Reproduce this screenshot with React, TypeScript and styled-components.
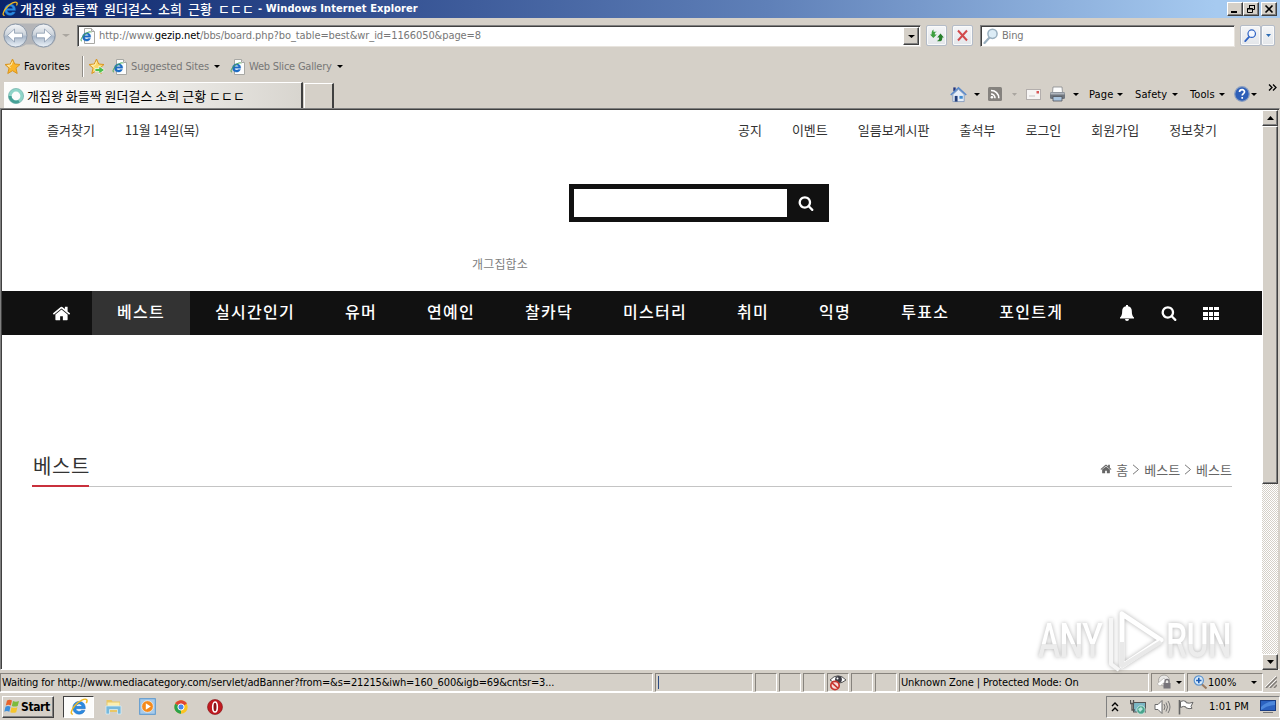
import React from "react";
import styled, { createGlobalStyle, css } from "styled-components";

const face = "#d5d0c8";
const tahoma = `"DejaVu Sans Condensed", "DejaVu Sans", "Noto Sans CJK KR", sans-serif`;
const gulim = `"Noto Sans CJK KR", sans-serif`;

const GlobalStyle = createGlobalStyle`
  * { box-sizing: border-box; }
  html, body { margin: 0; padding: 0; overflow: hidden; }
  body { width: 1280px; height: 720px; background: ${face}; font: 11px ${tahoma}; color: #000; }
  svg { display: block; flex: none; }
`;

const raised = css`
  background: ${face};
  border: 1px solid;
  border-color: #fff #404040 #404040 #fff;
  box-shadow: inset -1px -1px 0 #808080;
`;

const Desktop = styled.div`
  width: 1280px;
  height: 720px;
  display: flex;
  flex-direction: column;
  overflow: hidden;
  white-space: nowrap;
`;

const Text = styled.span<{ $ls?: number; $w?: number; $color?: string }>`
  flex: none;
  display: block;
  white-space: pre;
  letter-spacing: ${(p) => p.$ls ?? 0}px;
  width: ${(p) => (p.$w ? `${p.$w}px` : "auto")};
  color: ${(p) => p.$color ?? "inherit"};
`;
const Hostname = styled.span`
  color: #000;
`;

/* ---------- title bar ---------- */
const TitleBar = styled.header`
  height: 18px;
  flex: none;
  display: flex;
  align-items: center;
  padding: 0 3px 0 2px;
  background: linear-gradient(90deg, #0a246a 0%, #355293 30%, #5f80b8 60%, #a6caf0 95%);
  color: #fff;
`;
const TitleKorean = styled.span`
  width: 238px;
  margin-left: 2px;
  font: 500 13px/18px ${gulim};
  word-spacing: 3.2px;
  white-space: pre;
`;
const TitleLatin = styled.span`
  flex: 1;
  font: bold 11px/18px ${tahoma};
  letter-spacing: 0.1px;
`;
const WindowButton = styled.button<{ $gap?: boolean }>`
  ${raised}
  width: 16px;
  height: 14px;
  padding: 0;
  display: flex;
  align-items: center;
  justify-content: center;
  margin-left: ${(p) => (p.$gap ? 2 : 0)}px;
`;

/* ---------- address row ---------- */
const AddressRow = styled.div`
  height: 35px;
  flex: none;
  display: flex;
  align-items: center;
  padding: 0 5px 0 2px;
`;
const Field = styled.div<{ $w: number; $ml: number }>`
  width: ${(p) => p.$w}px;
  margin-left: ${(p) => p.$ml}px;
  height: 22px;
  flex: none;
  display: flex;
  align-items: center;
  background: #fff;
  border: 1px solid;
  border-color: #808080 #e8e4de #e8e4de #808080;
  box-shadow: inset 1px 1px 0 #404040;
  padding-left: 2px;
`;
const DropButton = styled.button`
  ${raised}
  width: 16px;
  height: 18px;
  margin: 1px 1px 0 auto;
  padding: 0;
  display: flex;
  align-items: center;
  justify-content: center;
`;
const GlassButton = styled.button<{ $w: number; $ml?: number }>`
  width: ${(p) => p.$w}px;
  height: 21px;
  margin-left: ${(p) => p.$ml ?? 0}px;
  padding: 0;
  display: flex;
  align-items: center;
  justify-content: center;
  border: 1px solid #b4bcc8;
  border-radius: 2px;
  background: linear-gradient(#f4f5f7, #e3e6ea);
  box-shadow: inset 0 0 0 1px #fafafa;
`;

/* ---------- favorites and tabs ---------- */
const FavoritesRow = styled.div`
  height: 27px;
  flex: none;
  display: flex;
  align-items: center;
  padding-left: 4px;
`;
const Separator = styled.i`
  width: 2px;
  height: 21px;
  margin: 0 4px 0 11px;
  border-left: 1px solid #908c86;
  border-right: 1px solid #fff;
`;
const TabRow = styled.div`
  height: 28px;
  flex: none;
  display: flex;
  align-items: flex-end;
  padding-left: 4px;
`;
const Tab = styled.div`
  width: 299px;
  height: 26px;
  display: flex;
  align-items: center;
  padding-left: 4px;
  background: linear-gradient(90deg, #fdfdfc, #f2f1ee 40%, #d8d5cf);
  border-top: 1px solid #fff;
  border-right: 2px solid #404040;
`;
const TabTitle = styled.span`
  margin-left: 3px;
  font: 400 13px/20px ${gulim};
`;
const NewTab = styled.div`
  width: 30px;
  height: 25px;
  margin-left: 1px;
  border: 1px solid #fff;
  border-right: 2px solid #404040;
  border-bottom: 0;
`;
const CommandBar = styled.div`
  display: flex;
  align-items: center;
  height: 28px;
  margin-left: auto;
  padding-right: 3px;
`;
const Overflow = styled.div`
  align-self: flex-start;
  padding-top: 3px;
`;
const Gap = styled.i<{ $w: number }>`
  width: ${(p) => p.$w}px;
  flex: none;
`;

/* ---------- page viewport ---------- */
const Viewport = styled.div`
  height: 562px;
  flex: none;
  display: flex;
  border: 1px solid;
  border-color: #808080 #d5d0c8 #fff #808080;
  box-shadow: inset 1px 1px 0 #404040;
  padding: 1px 1px 1px 1px;
`;
const Page = styled.main`
  width: 1260px;
  height: 560px;
  display: flex;
  flex-direction: column;
  background: #fff;
  font-family: ${gulim};
  color: #333;
`;
const TopLinks = styled.div`
  height: 40px;
  display: flex;
  align-items: center;
  padding: 0 45px;
  gap: 30px;
  font-size: 13px;
  line-height: 40px;
`;
const DateLabel = styled.span`
  letter-spacing: -0.2px;
`;
const Pusher = styled.i`
  flex: 1;
`;
const SearchBox = styled.div`
  width: 260px;
  height: 38px;
  margin: 34px 0 0 567px;
  display: flex;
  align-items: center;
  background: #111;
  padding-left: 5px;
`;
const SearchInput = styled.div`
  width: 213px;
  height: 28px;
  margin-right: 11px;
  background: #fff;
`;
const Keyword = styled.div`
  height: 18px;
  margin: 33px 0 0 470px;
  font-size: 12px;
  line-height: 18px;
  letter-spacing: 0.15px;
  color: #808080;
`;
const Nav = styled.nav`
  height: 44px;
  margin-top: 18px;
  display: flex;
  align-items: center;
  background: #111;
  color: #fff;
  padding: 0 43px 0 50px;
`;
const NavItem = styled.a<{ $active?: boolean }>`
  height: 44px;
  padding: 0 25px;
  font-size: 16px;
  font-weight: 500;
  line-height: 41px;
  letter-spacing: 1.28px;
  background: ${(p) => (p.$active ? "#333" : "transparent")};
`;
const Heading = styled.div`
  width: 1200px;
  height: 37px;
  margin: 115px 0 0 30px;
  display: flex;
  justify-content: space-between;
  border-bottom: 1px solid #c4c4c4;
`;
const HeadingTitle = styled.h1`
  height: 37px;
  width: 57px;
  margin: 0;
  padding-left: 1px;
  font-size: 20px;
  font-weight: 400;
  line-height: 31px;
  letter-spacing: 0.6px;
  border-bottom: 2px solid #c9303c;
`;
const Crumbs = styled.div`
  display: flex;
  align-items: center;
  height: 38px;
  gap: 4px;
  font-size: 13px;
  color: #666;
`;

/* ---------- scroll bar ---------- */
const ScrollBar = styled.div`
  width: 16px;
  height: 560px;
  display: flex;
  flex-direction: column;
  background: repeating-conic-gradient(#fff 0 25%, ${face} 0 50%) 0 0 / 2px 2px;
`;
const ScrollButton = styled.div`
  ${raised}
  height: 16px;
  display: flex;
  align-items: center;
  justify-content: center;
`;
const Thumb = styled.div`
  ${raised}
  height: 358px;
  margin-bottom: auto;
`;

/* ---------- watermark ---------- */
const Watermark = styled.div`
  position: absolute;
  left: 1038px;
  top: 607px;
  width: 200px;
  height: 68px;
  display: flex;
  align-items: center;
  filter: drop-shadow(0 0 2px rgba(0, 0, 0, 0.3));
`;
const WatermarkWord = styled.span<{ $w: number; $trim: number }>`
  flex: none;
  width: ${(p) => p.$w}px;
  margin-right: -${(p) => p.$trim}px;
  font: 500 48px/68px Roboto, "Liberation Sans", sans-serif;
  letter-spacing: -1px;
  transform: scaleX(0.7);
  transform-origin: 0 50%;
  background: linear-gradient(#fff 54%, #ececec 54%);
  -webkit-background-clip: text;
  color: transparent;
`;

/* ---------- status bar and taskbar ---------- */
const StatusBar = styled.div`
  height: 22px;
  flex: none;
  display: flex;
  align-items: center;
  gap: 2px;
  padding-top: 2px;
`;
const StatusCell = styled.div<{ $w: number }>`
  width: ${(p) => p.$w}px;
  height: 19px;
  flex: none;
  display: flex;
  align-items: center;
  border: 1px solid;
  border-color: #87837d #fff #fff #87837d;
  padding-left: 1px;
`;
const Taskbar = styled.footer`
  height: 28px;
  flex: none;
  display: flex;
  align-items: center;
  border-top: 1px solid #fff;
  padding-left: 2px;
`;
const StartButton = styled.button`
  ${raised}
  width: 52px;
  height: 22px;
  padding: 0 0 0 1px;
  display: flex;
  align-items: center;
  gap: 1px;
  font: bold 12px ${tahoma};
  letter-spacing: -0.4px;
`;
const ActiveTask = styled.div`
  width: 31px;
  height: 22px;
  margin-left: 9px;
  display: flex;
  align-items: center;
  justify-content: center;
  background: #fcfcfb;
  border: 1px solid;
  border-color: #404040 #fff #fff #404040;
`;
const Tray = styled.div`
  width: 174px;
  height: 22px;
  margin-left: auto;
  display: flex;
  align-items: center;
  border: 1px solid;
  border-color: #808080 #fff #fff #808080;
  padding-left: 4px;
`;

/* ---------- icons ---------- */
const Caret = ({ color = "#000", w = 6 }: { color?: string; w?: number }) => (
  <svg width={w} height="3" viewBox="0 0 6 3" preserveAspectRatio="none"><path d="M0 0h6L3 3z" fill={color} /></svg>
);
const IELogo = ({ size = 16 }: { size?: number }) => (
  <svg width={size} height={size} viewBox="0 0 16 16">
    <path d="M13.6 9.5H5.3c.2 1.6 1.4 2.4 2.8 2.4 1 0 1.7-.3 2.200-1h3c-.8 2.200-2.700 3.500-5.200 3.500C4.800 14.400 2.500 12 2.500 8.700S4.900 3 8.100 3s5.700 2.200 5.500 6.500zM5.400 7.400h5.200c-.2-1.300-1.200-2.100-2.500-2.100-1.400 0-2.400.8-2.700 2.100z" fill="#2a8ae0" stroke="#1560b8" strokeWidth=".4" />
    <path d="M2.600 14.300C.3 14.800.5 11 4.600 6.500 8.500 2.200 13.300.2 14.700 1.400c.7.600.5 1.800-.2 3.100" fill="none" stroke="#f0b820" strokeWidth="1.300" />
  </svg>
);
const PageIE = () => (
  <svg width="16" height="16" viewBox="0 0 16 16">
    <path d="M4.500.5h7l3 3v12h-10z" fill="#fdfdfd" stroke="#a8a8a4" />
    <path d="M11.500.5v3h3" fill="#ddd" stroke="#a8a8a4" />
    <path d="M10.700 9.200H4.600c.1 1.200.9 1.900 2 1.900.8 0 1.200-.3 1.500-.7h2.300c-.6 1.700-2 2.700-3.900 2.700-2.400 0-4.100-1.800-4.100-4.100S4.200 4.800 6.600 4.800s4.400 1.700 4.100 4.400zM4.700 7.700h3.700c-.2-.9-.9-1.400-1.800-1.400-1 0-1.700.5-1.900 1.400z" fill="#1e6cc4" stroke="#1e6cc4" strokeWidth=".4" />
    <path d="M1.800 13.100C-.3 12.800 2 8.500 5 6.200 8 3.700 10.800 3.200 11.300 4.500" fill="none" stroke="#48a850" strokeWidth="1" />
  </svg>
);
const NavArrows = () => (
  <svg width="56" height="28" viewBox="0 0 56 28">
    <defs>
      <linearGradient id="orb" x1="0" y1="0" x2="0" y2="1">
        <stop offset="0" stopColor="#f4f6f8" /><stop offset=".45" stopColor="#cdd4dc" />
        <stop offset=".55" stopColor="#a9b8ca" /><stop offset="1" stopColor="#eef4fa" />
      </linearGradient>
    </defs>
    <path d="M13 1.500h29a12 12 0 0 1 0 24q-6 0-10-3h-8q-4 3-10 3a12 12 0 0 1-1-24z" fill="#b4b5b8" />
    {[13.5, 41.5].map((cx) => (
      <circle key={cx} cx={cx} cy="13.500" r="11.500" fill="url(#orb)" stroke="#8b98a8" />
    ))}
    <g fill="#fff" stroke="#8a9bb0" strokeWidth=".8">
      <path d="M5.500 13.500l7-6.500v4.200h8v4.600h-8V20z" />
      <path d="M49.500 13.500l-7-6.500v4.200h-8v4.600h8V20z" />
    </g>
  </svg>
);
const Star = ({ add }: { add?: boolean }) => (
  <svg width="17" height="17" viewBox="0 0 17 17">
    <path d="M8.500 1l2.200 5 5.300.5-4 3.600 1.200 5.400-4.700-2.800-4.700 2.800L5 10.100 1 6.500 6.300 6z" fill={add ? "#fbd86a" : "#fbb62c"} stroke="#d99520" />
    <path d="M8.500 3.500L7 7l-3.500.5 3 2" fill="none" stroke="#fff0b8" />
    {add && <path d="M7 10.500h4V8l5.500 4-5.500 4v-2.500H7z" fill="#4dbf4a" stroke="#fff" strokeWidth=".7" />}
  </svg>
);
const Spinner = () => (
  <svg width="16" height="16" viewBox="0 0 16 16">
    <circle cx="8" cy="8" r="6" fill="none" stroke="#8fd4c8" strokeWidth="3.200" />
    <path d="M2 8a6 6 0 0 0 9 5.200" fill="none" stroke="#45a096" strokeWidth="3" />
    <circle cx="8" cy="8" r="7.600" fill="none" stroke="#66aaa2" strokeWidth=".6" />
  </svg>
);
const Refresh = () => (
  <svg width="16" height="15" viewBox="0 0 16 15">
    <path d="M4.500 1.500v2.300H8c-2 .4-2.200 1.500-2.200 2.700h2L4.300 10 1 6.500h1.600C2.500 4 3 2.500 4.500 1.500z" fill="#3ea040" />
    <path d="M11.500 13.500V13c-1.500.3-2.700.2-3.700 0 2-.5 2.400-2 2.400-3.500h-2l3.300-4L14.900 9.500h-1.600c0 2-.3 3.200-1.800 4z" fill="#277f2b" />
  </svg>
);
const Cross = () => (
  <svg width="13" height="13" viewBox="0 0 13 13">
    <path d="M2 1.500l9 10M11 1.500l-9 10" stroke="#d24a4c" strokeWidth="2" />
  </svg>
);
const Lens = ({ color, size = 16, glass = "#dcecf6" }: { color: string; size?: number; glass?: string }) => (
  <svg width={size} height={size} viewBox="0 0 16 16">
    <path d="M6.500 9.500L1.500 15" stroke={color} strokeWidth="2.200" strokeLinecap="round" />
    <circle cx="9.500" cy="5.800" r="4.600" fill={glass} stroke={color} strokeWidth="1.500" />
  </svg>
);
const HomeFull = () => (
  <svg width="17" height="17" viewBox="0 0 18 17">
    <path d="M3.500 1h2.500v4h-2.500z" fill="#23357e" />
    <path d="M3 8.500L9 3l6 5.500V16H3z" fill="#e6eef8" stroke="#7792b8" strokeWidth=".8" />
    <path d="M.8 9L9 1.500 17.200 9" fill="none" stroke="#5b8acb" strokeWidth="1.700" />
    <path d="M5 10h3v6H5z" fill="#243f7a" /><path d="M10 10h3.500v3H10z" fill="#3f8bd0" />
  </svg>
);
const Feed = () => (
  <svg width="14" height="14" viewBox="0 0 14 14">
    <rect width="14" height="14" rx="1.500" fill="#85827e" />
    <path d="M3 7a4 4 0 0 1 4 4.200M3 3.500a7.600 7.600 0 0 1 7.800 7.700" fill="none" stroke="#fff" strokeWidth="1.600" />
    <circle cx="3.900" cy="10.200" r="1.300" fill="#fff" />
  </svg>
);
const Mail = () => (
  <svg width="15" height="11" viewBox="0 0 15 11">
    <rect x=".5" y=".5" width="14" height="10" fill="#f7f5f4" stroke="#b3aeac" />
    <rect x="10.500" y="2" width="2.500" height="2.500" fill="#d85858" /><path d="M3 7h6" stroke="#c8c4c4" />
  </svg>
);
const Printer = () => (
  <svg width="17" height="16" viewBox="0 0 17 16">
    <path d="M4 1h9l.5 6h-10z" fill="#fdfdfd" stroke="#85888c" strokeWidth=".8" />
    <rect x="1" y="6" width="15" height="7" rx="1.500" fill="#70767e" />
    <rect x="1.500" y="6.500" width="14" height="2" fill="#b0b6be" />
    <path d="M4 10.500h9V15H4z" fill="#a9c4de" stroke="#50545a" strokeWidth=".8" />
  </svg>
);
const Help = () => (
  <svg width="16" height="16" viewBox="0 0 16 16">
    <circle cx="8" cy="8" r="7.300" fill="#2e5fb8" stroke="#8b9fc0" strokeWidth="1.200" />
    <path d="M5.500 6c.2-3.200 5.200-3 5 0-.1 1.500-2.300 1.700-2.300 3.500M8.200 11v1.800" fill="none" stroke="#fff" strokeWidth="1.700" />
  </svg>
);
const SiteHome = ({ size, color }: { size: number; color: string }) => (
  <svg width={size} height={size} viewBox="0 0 1792 1792" fill={color}>
    <path d="M1472 992v480q0 26-19 45t-45 19h-384v-384h-256v384h-384q-26 0-45-19t-19-45v-480q0-1 .5-3t.5-3l575-474 575 474q1 2 1 6zm223-69l-62 74q-8 9-21 11h-3q-13 0-21-7l-692-577-692 577q-12 8-24 7-13-2-21-11l-62-74q-8-10-7-23.500t11-21.500l719-599q32-26 76-26t76 26l244 204v-195q0-14 9-23t23-9h192q14 0 23 9t9 23v408l219 182q10 8 11 21.500t-7 23.500z" />
  </svg>
);
const SiteSearch = () => (
  <svg width="16" height="16" viewBox="0 0 1792 1792" fill="#fff">
    <path d="M1216 832q0-185-131.500-316.500t-316.500-131.500-316.500 131.500-131.500 316.500 131.500 316.500 316.500 131.500 316.500-131.500 131.500-316.500zm512 832q0 52-38 90t-90 38q-54 0-90-38l-343-342q-179 124-399 124-143 0-273.500-55.500t-225-150-150-225-55.500-273.500 55.500-273.500 150-225 225-150 273.500-55.500 273.500 55.500 225 150 150 225 55.500 273.500q0 220-124 399l343 343q37 37 37 90z" />
  </svg>
);
const Bell = () => (
  <svg width="14" height="16" viewBox="0 0 14 16">
    <path d="M6 0h2v1.300c2.500.5 3.800 2.300 3.800 4.500 0 3.700.7 5.500 2.200 6.700v1H0v-1c1.500-1.200 2.200-3 2.200-6.700 0-2.200 1.300-4 3.800-4.500zM5 14h4a2 2 0 0 1-4 0z" fill="#fff" />
  </svg>
);
const Grid = () => (
  <svg width="16" height="13" viewBox="0 0 16 13" shapeRendering="crispEdges">
    {[0, 5, 10].map((y) => [0, 6, 11].map((x) => (
      <rect key={`${x}-${y}`} x={x} y={y} width={x === 6 ? 4 : 5} height={y === 5 ? 4 : 3} fill="#fff" />
    )))}
  </svg>
);
const Chevron = () => (
  <svg width="8" height="11" viewBox="0 0 8 11"><path d="M1 .8l5.500 4.700L1 10.200" fill="none" stroke="#777" /></svg>
);
const BlockedEye = () => (
  <svg width="18" height="17" viewBox="0 0 18 17">
    <path d="M1 6Q9-2.500 17 6 9 12.500 1 6z" fill="#fff" stroke="#555" />
    <circle cx="9.500" cy="5.500" r="3.400" fill="#3c3c44" /><circle cx="8.500" cy="4.500" r="1" fill="#fff" />
    <circle cx="6" cy="11.500" r="4.200" fill="#f8dcdc" stroke="#c8342e" strokeWidth="1.700" />
    <path d="M3 8.800l6 5.400" stroke="#c8342e" strokeWidth="1.600" />
  </svg>
);
const PrivacyLock = () => (
  <svg width="17" height="16" viewBox="0 0 17 16">
    <circle cx="8" cy="6.500" r="5.500" fill="#e9e8e6" stroke="#aaa7a2" />
    <path d="M1 10l7-6 2 3-6 5z" fill="#fff" stroke="#b5b2ae" strokeWidth=".7" />
    <path d="M9 9V7.500a2 2 0 0 1 4 0V9" fill="none" stroke="#77747a" strokeWidth="1.300" />
    <rect x="7.500" y="9" width="7" height="5.500" fill="#77747a" />
  </svg>
);
const ZoomIn = () => (
  <svg width="15" height="15" viewBox="0 0 15 15">
    <path d="M8 8.500l5.500 5" stroke="#9a7a60" strokeWidth="2" />
    <circle cx="5.800" cy="5.500" r="4.600" fill="#d8eafa" stroke="#5c94d0" strokeWidth="1.200" />
    <path d="M5.800 2.800v5.400M3.100 5.500h5.400" stroke="#1c5cb4" strokeWidth="1.600" />
  </svg>
);
const Grip = () => (
  <svg width="12" height="12" viewBox="0 0 12 12">
    <path d="M1 12L12 1M5 12l7-7M9 12l3-3" stroke="#807c78" strokeWidth="1.500" />
    <path d="M0 11L11 0M4 11l7-7" stroke="#fff" strokeWidth=".8" />
  </svg>
);
const WindowsFlag = () => (
  <svg width="16" height="15" viewBox="0 0 16 15">
    <path d="M3 1.500q2.500-1.300 5 0L6.800 6.500q-2.500-1.300-5 0z" fill="#e8642c" />
    <path d="M9 2q2.800 1.300 6 0l-1.300 5q-3 1.200-5.900 0z" fill="#7dbb3c" />
    <path d="M1.500 7.700q2.600-1.300 5 0l-1.200 5q-2.500-1.300-5 0z" fill="#3c8fdc" />
    <path d="M7.500 8.200q2.900 1.200 5.900 0l-1.200 5q-3 1.200-5.900 0z" fill="#f6c52c" />
  </svg>
);
const Explorer = () => (
  <svg width="17" height="17" viewBox="0 0 17 17">
    <path d="M1.500 2h5l1 1.500H15V14H1.500z" fill="#e9c766" /><path d="M2.500 4.500h12v4h-12z" fill="#fbeeb0" />
    <path d="M1 8h15v8h-3.500v-4.500h-8V16H1z" fill="#76b8dc" stroke="#d6eef8" strokeWidth=".8" />
  </svg>
);
const MediaPlayer = () => (
  <svg width="17" height="17" viewBox="0 0 17 17">
    <rect x=".7" y=".7" width="15.600" height="15.600" fill="#a8cbea" stroke="#5696d0" />
    <circle cx="8.500" cy="8.500" r="5.800" fill="#f48a1c" stroke="#fff" strokeWidth=".6" /><path d="M6.800 5.200v6.600l5-3.300z" fill="#fff" />
  </svg>
);
const Chrome = () => (
  <svg width="14" height="14" viewBox="0 0 14 14">
    <circle cx="7" cy="7" r="6.700" fill="#fbc421" />
    <path d="M7 7L1.200 3.650a6.700 6.700 0 0 1 11.600 0z" fill="#df4535" />
    <path d="M7 7L1.200 3.650A6.700 6.700 0 0 0 7 13.700z" fill="#2ba24c" />
    <circle cx="7" cy="7" r="3.100" fill="#4688ee" stroke="#fff" />
  </svg>
);
const Opera = () => (
  <svg width="16" height="16" viewBox="0 0 16 16">
    <circle cx="8" cy="8" r="7.500" fill="#c11a20" stroke="#801014" strokeWidth=".6" />
    <ellipse cx="8" cy="8" rx="2.300" ry="5" fill="#8c1216" stroke="#fff" strokeWidth="1.600" />
  </svg>
);
const Network = () => (
  <svg width="16" height="16" viewBox="0 0 16 16">
    <rect x="3.500" y="3.500" width="12" height="9.500" fill="#7bb7c4" stroke="#555" />
    <path d="M0.500 1v3.500h3V1M2 4.500V11h3" fill="none" stroke="#555" strokeWidth="1.300" />
    <circle cx="11" cy="11" r="4.200" fill="#48a48c" stroke="#e8f4f0" strokeWidth=".7" /><path d="M8 10l3-2 2 2-3 3z" fill="#b8e4dc" />
  </svg>
);
const Speaker = () => (
  <svg width="17" height="16" viewBox="0 0 17 16">
    <path d="M1 5.500h3l4-4v13l-4-4H1z" fill="#fff" stroke="#6c6c6c" />
    <path d="M10 5q2 3 0 6M12 3.500q3 4.500 0 9M14 2q4 6 0 12" fill="none" stroke="#777" />
  </svg>
);
const Flag = () => (
  <svg width="16" height="16" viewBox="0 0 16 16">
    <path d="M1.500 1v14.500" stroke="#666" strokeWidth="1.600" />
    <path d="M2.500 2.500q3-1.500 5.500 0v1.200q3 1.200 7-.4l-2 4 1 2q-3 1-6-.5V8q-2.500-1.500-5.500.5z" fill="#fff" stroke="#666" />
  </svg>
);
const ShowDesktop = () => (
  <svg width="16" height="13" viewBox="0 0 16 13">
    <rect x=".5" y=".5" width="15" height="10" fill="#2c62c0" stroke="#183c84" /><path d="M1 7Q7 1 15 1v4Q8 5 1 10z" fill="#4d88dc" /><path d="M3 12.500h10" stroke="#777" />
  </svg>
);

const navItems = ["베스트", "실시간인기", "유머", "연예인", "찰카닥", "미스터리", "취미", "익명", "투표소", "포인트게"];
const memberLinks = ["공지", "이벤트", "일름보게시판", "출석부", "로그인", "회원가입", "정보찾기"];

export default function App() {
  return (
    <Desktop>
      <GlobalStyle />
      <TitleBar>
        <IELogo />
        <TitleKorean>개집왕 화들짝 원더걸스 소희 근황 ㄷㄷㄷ</TitleKorean>
        <TitleLatin>- Windows Internet Explorer</TitleLatin>
        <WindowButton><svg width="10" height="10"><path d="M1 8h6" stroke="#000" strokeWidth="2" /></svg></WindowButton>
        <WindowButton><svg width="10" height="10"><path d="M3.500 4V1.500h5v4H7M3 1.500h6M1.500 4.500h5v4h-5zM1 5h6" fill="none" stroke="#000" /></svg></WindowButton>
        <WindowButton $gap><svg width="10" height="10"><path d="M1.500 1.500l7 7M8.500 1.500l-7 7" stroke="#000" strokeWidth="1.600" /></svg></WindowButton>
      </TitleBar>

      <AddressRow>
        <NavArrows />
        <Gap $w={4} />
        <Caret color="#aaa6a0" w={8} />
        <Field $w={844} $ml={7}>
          <PageIE />
          <Gap $w={3} />
          <Text $ls={-0.09} $color="#777">http://www.<Hostname>gezip.net</Hostname>/bbs/board.php?bo_table=best&amp;wr_id=1166050&amp;page=8</Text>
          <DropButton><Caret w={7} /></DropButton>
        </Field>
        <GlassButton $w={21} $ml={5}><Refresh /></GlassButton>
        <GlassButton $w={21} $ml={5}><Cross /></GlassButton>
        <Field $w={255} $ml={7}>
          <Lens color="#9ab0c0" />
          <Gap $w={3} />
          <Text $ls={-0.2} $color="#777">Bing</Text>
        </Field>
        <GlassButton $w={21} $ml={5}><Lens color="#2f63c4" size={13} glass="#f4f8ff" /></GlassButton>
        <GlassButton $w={14}><Caret color="#2c6cb4" w={5} /></GlassButton>
      </AddressRow>

      <FavoritesRow>
        <Star />
        <Gap $w={3} />
        <Text $w={47} $ls={0.15}>Favorites</Text>
        <Separator />
        <Star add />
        <Gap $w={7} />
        <PageIE />
        <Gap $w={3} />
        <Text $w={79} $ls={-0.13} $color="#777">Suggested Sites</Text>
        <Gap $w={4} />
        <Caret />
        <Gap $w={10} />
        <PageIE />
        <Gap $w={3} />
        <Text $w={83} $ls={-0.22} $color="#777">Web Slice Gallery</Text>
        <Gap $w={5} />
        <Caret />
      </FavoritesRow>

      <TabRow>
        <Tab><Spinner /><TabTitle>개집왕 화들짝 원더걸스 소희 근황 ㄷㄷㄷ</TabTitle></Tab>
        <NewTab />
        <CommandBar>
          <HomeFull /><Gap $w={7} /><Caret /><Gap $w={8} />
          <Feed /><Gap $w={10} /><Caret color="#aaa6a0" w={5} /><Gap $w={9} />
          <Mail /><Gap $w={8} /><Printer /><Gap $w={7} /><Caret /><Gap $w={10} />
          <Text $w={25} $ls={0.15}>Page</Text><Gap $w={3} /><Caret /><Gap $w={12} />
          <Text $w={33} $ls={0.1}>Safety</Text><Gap $w={4} /><Caret /><Gap $w={12} />
          <Text $w={26} $ls={0.1}>Tools</Text><Gap $w={3} /><Caret /><Gap $w={9} />
          <Help /><Gap $w={1} /><Caret /><Gap $w={11} />
          <Overflow><svg width="9" height="9"><path d="M1 1.500l3 3-3 3M5 1.500l3 3-3 3" fill="none" stroke="#000" strokeWidth="1.300" /></svg></Overflow>
        </CommandBar>
      </TabRow>

      <Viewport>
        <Page>
          <TopLinks>
            <span>즐겨찾기</span>
            <DateLabel>11월 14일(목)</DateLabel>
            <Pusher />
            {memberLinks.map((label) => <span key={label}>{label}</span>)}
          </TopLinks>
          <SearchBox><SearchInput /><SiteSearch /></SearchBox>
          <Keyword>개그집합소</Keyword>
          <Nav>
            <SiteHome size={19} color="#fff" />
            <Gap $w={21} />
            {navItems.map((label, i) => <NavItem key={label} $active={i === 0}>{label}</NavItem>)}
            <Pusher />
            <Bell /><Gap $w={27} /><SiteSearch /><Gap $w={26} /><Grid />
          </Nav>
          <Heading>
            <HeadingTitle>베스트</HeadingTitle>
            <Crumbs>
              <SiteHome size={12} color="#666" /><span>홈</span><Chevron /><span>베스트</span><Chevron /><span>베스트</span>
            </Crumbs>
          </Heading>
        </Page>
        <ScrollBar>
          <ScrollButton><svg width="7" height="4"><path d="M0 4h7L3.500 0z" /></svg></ScrollButton>
          <Thumb />
          <ScrollButton><svg width="7" height="4"><path d="M0 0h7L3.500 4z" /></svg></ScrollButton>
        </ScrollBar>
      </Viewport>

      <StatusBar>
        <StatusCell $w={653}><Text $ls={-0.125}>Waiting for http://www.mediacategory.com/servlet/adBanner?from=&amp;s=21215&amp;iwh=160_600&amp;igb=69&amp;cntsr=3...</Text></StatusCell>
        <StatusCell $w={98}><svg width="3" height="13"><path d="M1.500 0v13" stroke="#2c4c84" /></svg></StatusCell>
        <StatusCell $w={22} />
        <StatusCell $w={22} />
        <StatusCell $w={22} />
        <StatusCell $w={22}><BlockedEye /></StatusCell>
        <StatusCell $w={22} />
        <StatusCell $w={22} />
        <StatusCell $w={250}><Text $ls={-0.13}>Unknown Zone | Protected Mode: On</Text></StatusCell>
        <StatusCell $w={34}><Gap $w={3} /><PrivacyLock /><Gap $w={3} /><Caret /></StatusCell>
        <StatusCell $w={76}><Gap $w={4} /><ZoomIn /><Text $w={43}>100%</Text><Caret /></StatusCell>
        <Grip />
      </StatusBar>

      <Taskbar>
        <StartButton><WindowsFlag />Start</StartButton>
        <ActiveTask><IELogo size={18} /></ActiveTask>
        <Gap $w={11} /><Explorer />
        <Gap $w={17} /><MediaPlayer />
        <Gap $w={18} /><Chrome />
        <Gap $w={19} /><Opera />
        <Tray>
          <svg width="8" height="12"><path d="M1 5l3-3 3 3M1 10l3-3 3 3" fill="none" stroke="#000" strokeWidth="1.400" /></svg>
          <Gap $w={11} /><Network />
          <Gap $w={8} /><Speaker />
          <Gap $w={7} /><Flag />
          <Gap $w={15} /><Text $w={40}>1:01 PM</Text>
          <Gap $w={11} /><ShowDesktop />
        </Tray>
      </Taskbar>

      <Watermark>
        <WatermarkWord $w={100} $trim={34}>ANY</WatermarkWord>
        <svg width="62" height="66" viewBox="0 0 62 66" fill="none" strokeLinejoin="round">
          <path d="M18 6v52L57 32z" stroke="#fff" strokeWidth="5" />
          <path d="M18 34v24L57 34" stroke="#e9e9e9" strokeWidth="4" />
          <path d="M7 10v46l8 6" stroke="#f6f6f6" strokeWidth="4" />
        </svg>
        <WatermarkWord $w={100} $trim={34}>RUN</WatermarkWord>
      </Watermark>
    </Desktop>
  );
}
